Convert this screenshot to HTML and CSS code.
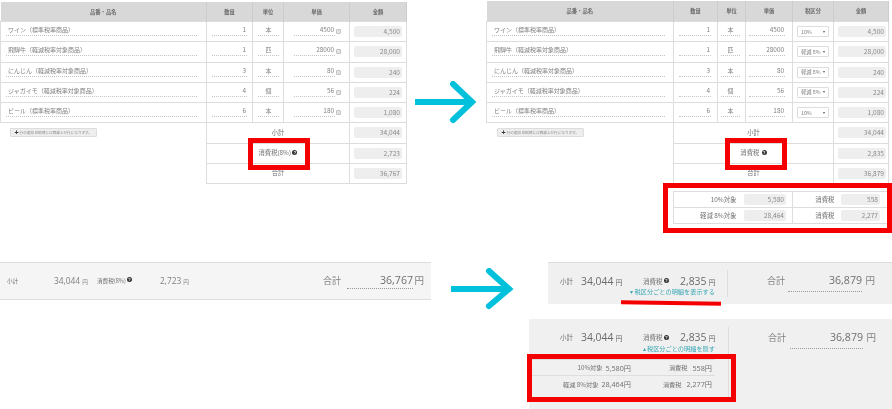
FILE: index.html
```html
<!DOCTYPE html>
<html lang="ja">
<head>
<meta charset="utf-8">
<title>消費税</title>
<link rel="stylesheet" href="styles.css">
</head>
<body>
<div class="canvas">

<section class="shot shot-a">
<table class="sheet">
<colgroup><col class="a1"><col class="a2"><col class="a3"><col class="a4"><col class="a5"></colgroup>
<thead><tr><th>品番・品名</th><th>数量</th><th>単位</th><th>単価</th><th>金額</th></tr></thead>
<tbody>
<tr><td class="name"><div class="f">ワイン（標準税率商品）</div></td><td><div class="f r">1</div></td><td><div class="f c">本</div></td><td><div class="pr"><div class="f r">4500</div><i class="cal"></i></div></td><td><div class="amt">4,500</div></td></tr>
<tr><td class="name"><div class="f">飛騨牛（軽減税率対象商品）</div></td><td><div class="f r">1</div></td><td><div class="f c">匹</div></td><td><div class="pr"><div class="f r">28000</div><i class="cal"></i></div></td><td><div class="amt">28,000</div></td></tr>
<tr><td class="name"><div class="f">にんじん（軽減税率対象商品）</div></td><td><div class="f r">3</div></td><td><div class="f c">本</div></td><td><div class="pr"><div class="f r">80</div><i class="cal"></i></div></td><td><div class="amt">240</div></td></tr>
<tr><td class="name"><div class="f">ジャガイモ（軽減税率対象商品）</div></td><td><div class="f r">4</div></td><td><div class="f c">個</div></td><td><div class="pr"><div class="f r">56</div><i class="cal"></i></div></td><td><div class="amt">224</div></td></tr>
<tr><td class="name"><div class="f">ビール（標準税率商品）</div></td><td><div class="f r">6</div></td><td><div class="f c">本</div></td><td><div class="pr"><div class="f r">180</div><i class="cal"></i></div></td><td><div class="amt">1,080</div></td></tr>
<tr class="sum"><td class="blank" rowspan="3"><span class="addbtn"><b>+</b>行の追加 印刷時には罫線上が行になります。</span></td><td colspan="3">小計</td><td><div class="amt">34,044</div></td></tr>
<tr class="sum"><td colspan="3">消費税(8%) <i class="q">?</i></td><td><div class="amt">2,723</div></td></tr>
<tr class="sum"><td colspan="3">合計</td><td><div class="amt">36,767</div></td></tr>
</tbody>
</table>
</section>

<section class="shot shot-b">
<table class="sheet">
<colgroup><col class="b1"><col class="b2"><col class="b3"><col class="b4"><col class="b5"><col class="b6"></colgroup>
<thead><tr><th>品番・品名</th><th>数量</th><th>単位</th><th>単価</th><th>税区分</th><th>金額</th></tr></thead>
<tbody>
<tr><td class="name"><div class="f">ワイン（標準税率商品）</div></td><td><div class="f r">1</div></td><td><div class="f c">本</div></td><td><div class="f r">4500</div></td><td><div class="sel">10%<i></i></div></td><td><div class="amt">4,500</div></td></tr>
<tr><td class="name"><div class="f">飛騨牛（軽減税率対象商品）</div></td><td><div class="f r">1</div></td><td><div class="f c">匹</div></td><td><div class="f r">28000</div></td><td><div class="sel">軽減 8%<i></i></div></td><td><div class="amt">28,000</div></td></tr>
<tr><td class="name"><div class="f">にんじん（軽減税率対象商品）</div></td><td><div class="f r">3</div></td><td><div class="f c">本</div></td><td><div class="f r">80</div></td><td><div class="sel">軽減 8%<i></i></div></td><td><div class="amt">240</div></td></tr>
<tr><td class="name"><div class="f">ジャガイモ（軽減税率対象商品）</div></td><td><div class="f r">4</div></td><td><div class="f c">個</div></td><td><div class="f r">56</div></td><td><div class="sel">軽減 8%<i></i></div></td><td><div class="amt">224</div></td></tr>
<tr><td class="name"><div class="f">ビール（標準税率商品）</div></td><td><div class="f r">6</div></td><td><div class="f c">本</div></td><td><div class="f r">180</div></td><td><div class="sel">10%<i></i></div></td><td><div class="amt">1,080</div></td></tr>
<tr class="sum"><td class="blank" rowspan="3"><span class="addbtn"><b>+</b>行の追加 印刷時には罫線上が行になります。</span></td><td colspan="4">小計</td><td><div class="amt">34,044</div></td></tr>
<tr class="sum"><td colspan="4">消費税 <i class="q q-gap">?</i></td><td><div class="amt">2,835</div></td></tr>
<tr class="sum"><td colspan="4">合計</td><td><div class="amt">36,879</div></td></tr>
</tbody>
</table>
<table class="taxes">
<tr><th>10%対象</th><td><div class="amt">5,580</div></td><th>消費税</th><td><div class="amt">558</div></td></tr>
<tr><th>軽減 8%対象</th><td><div class="amt">28,464</div></td><th>消費税</th><td><div class="amt">2,277</div></td></tr>
</table>
</section>

<section class="bar bar-a">
<div class="bar-main">
<span class="lbl w-a1">小計</span><span class="val w-a2">34,044<small>円</small></span>
<span class="lbl w-a3">消費税(8%) <i class="q">?</i></span><span class="val w-a4">2,723<small>円</small></span>
</div>
<div class="total total-a"><span class="tl">合計</span><span class="tv">36,767</span><span class="ty">円</span></div>
</section>

<section class="bar bar-b">
<div class="bar-left">
<div class="line"><span class="lbl">小計</span><span class="val big w-b1">34,044<small>円</small></span><span class="lbl w-b2">消費税 <i class="q">?</i></span><span class="val big w-b3">2,835<small>円</small></span></div>
<a class="toggle">▾ 税区分ごとの明細を表示する</a>
</div>
<div class="total total-b"><span class="tl">合計</span><span class="tv">36,879</span><span class="ty">円</span></div>
</section>

<section class="bar bar-c">
<div class="bar-left">
<div class="line"><span class="lbl">小計</span><span class="val big w-b1">34,044<small>円</small></span><span class="lbl w-b2">消費税 <i class="q">?</i></span><span class="val big w-b3">2,835<small>円</small></span></div>
<a class="toggle">▴ 税区分ごとの明細を隠す</a>
<div class="detail first"><div class="dc dc1"><span class="dk">10%対象</span><span class="dv">5,580円</span></div><div class="dc dc2"><span class="dk">消費税</span><span class="dv">558円</span></div></div>
<div class="detail"><div class="dc dc1"><span class="dk">軽減 8%対象</span><span class="dv">28,464円</span></div><div class="dc dc2"><span class="dk">消費税</span><span class="dv">2,277円</span></div></div>
</div>
<div class="total total-b"><span class="tl">合計</span><span class="tv">36,879</span><span class="ty">円</span></div>
</section>

<svg class="arrow arrow-a" width="64" height="48" viewBox="0 0 64 48"><path d="M0 21H57M38 3L57 21L38 39" fill="none" stroke="#00c1dc" stroke-width="6" stroke-linecap="round"/></svg>
<svg class="arrow arrow-b" width="64" height="48" viewBox="0 0 64 48"><path d="M0 21H58M38 3L58 21L38 38" fill="none" stroke="#00c1dc" stroke-width="6" stroke-linecap="round"/></svg>

<div class="mark m1"></div>
<div class="mark m2"></div>
<div class="mark m3"></div>
<div class="mark m4"></div>
<div class="underline"></div>
</div>
</body>
</html>
```
FILE: styles.css
```css
* { box-sizing: border-box; }
html, body { margin: 0; padding: 0; background: #fff; }
body { font-family: "Noto Sans CJK JP", "Open Sans", sans-serif; color: #808080; overflow: hidden; }
.canvas { position: relative; width: 892px; height: 409px; overflow: hidden; }

.shot { position: absolute; filter: blur(0.35px); }
.shot-a { left: 0; top: 2px; width: 406px; }
.shot-b { left: 486px; top: 1px; width: 402px; }

.sheet { border-collapse: collapse; table-layout: fixed; width: 100%; font-size: 6px; }
.a1 { width: 206px; } .a2 { width: 46px; } .a3 { width: 31px; } .a4 { width: 66px; } .a5 { width: 57px; }
.b1 { width: 187px; } .b2 { width: 44px; } .b3 { width: 28px; } .b4 { width: 47px; } .b5 { width: 41px; } .b6 { width: 55px; }

.sheet th { background: #d8d8d8; height: 20.5px; font-size: 5.3px; font-weight: 700; color: #6a6a6a; border-right: 1px solid #ccc; padding: 0; text-align: center; }
.shot-a .sheet th { height: 19.5px; }
.sheet td { height: 20.25px; padding: 0 4px; border: 1px solid #ddd; overflow: hidden; line-height: 10px; }
.sheet td.name { padding: 0 9px 0 5px; }
.shot-b .sheet td.name { padding: 0 8px 0 5px; }
.shot-a tbody tr:not(.sum) td:nth-child(2) { padding: 0 5px; }
.shot-a tbody tr:not(.sum) td:nth-child(3) { padding: 0 4px 0 5px; }
.shot-a tbody tr:not(.sum) td:nth-child(4) { padding: 0 9px 0 10px; }
.shot-b tbody tr:not(.sum) td:nth-child(2) { padding: 0 6px 0 5px; }
.shot-b tbody tr:not(.sum) td:nth-child(3) { padding: 0 5px 0 3px; }
.shot-b tbody tr:not(.sum) td:nth-child(4) { padding: 0 7px 0 3px; }
.shot-b .sheet tbody td:last-child { padding: 0 2px 0 4px; }
.sheet tr.sum td { text-align: center; color: #707070; font-size: 6.3px; }
.sheet td.blank { border: 0; border-right: 1px solid #ddd; vertical-align: top; text-align: left !important; padding: 5px 0 0 9px; }
.shot-b .sheet td.blank { padding-left: 10px; }

.f { flex: 1; border-bottom: 1px dotted #c4c4c4; height: 11px; line-height: 10px; margin-bottom: 2px; padding: 0 2px; white-space: nowrap; font-size: 6px; }
.f.r { text-align: right; padding: 0 1px; font-size: 6.4px; }
.f.c { text-align: center; }
.pr { display: flex; align-items: center; }
.amt { background: #eee; border-radius: 2px; height: 11px; line-height: 11px; text-align: right; padding: 0 2px; font-size: 6.6px; color: #8a8a8a; }
.cal { flex: none; width: 5px; height: 5px; margin: 0 -1px 0 1px; background: #e4e4e4; border: 1px solid #c4c4c4; border-radius: 1px; }

.sel { display: flex; justify-content: space-between; align-items: center; height: 11px; border: 1px solid #ddd; padding: 0 3px 0 3px; font-size: 5.3px; background: #fff; border-radius: 1px; }
.sel i { border: 1.5px solid transparent; border-top: 2px solid #555; border-bottom: 0; }

.addbtn { display: inline-flex; align-items: center; height: 9px; width: 87px; padding: 0 2px 0 4px; background: #eee; border: 1px solid #ddd; font-size: 3.6px; line-height: 1; color: #888; border-radius: 1px; white-space: nowrap; overflow: hidden; }
.addbtn b { font: 700 7px/7px "Liberation Sans", sans-serif; color: #333; margin-right: 1px; }

.q { display: inline-block; width: 5px; height: 5px; border-radius: 50%; background: #333; color: #fff; font: 700 4px/5px "Liberation Sans", sans-serif; text-align: center; vertical-align: 1.5px; }
.q-gap { margin-left: 1px; }

.taxes { position: absolute; left: 187px; top: 190px; width: 215px; border-collapse: collapse; table-layout: fixed; font-size: 6.4px; }
.taxes th { font-weight: 400; text-align: right; padding: 0 2px 0 0; height: 16px; border-top: 1px solid #ddd; border-bottom: 1px solid #ddd; color: #707070; }
.taxes td { padding: 0; border-top: 1px solid #ddd; border-bottom: 1px solid #ddd; }
.taxes th:first-child { border-left: 1px solid #ddd; width: 65px; }
.taxes td:nth-child(2) { width: 54px; border-right: 1px solid #ddd; padding-right: 5px; }
.taxes th:nth-child(3) { width: 45px; padding-right: 3px; }
.taxes td:last-child { border-right: 1px solid #ddd; padding-right: 2px; }

.bar { position: absolute; display: flex; filter: blur(0.3px); }
.bar-a { left: 0; top: 262px; width: 431px; height: 38px; background: #f5f5f5; border-top: 1px solid #ddd; border-bottom: 1px solid #ddd; padding-left: 7px; }
.bar-b { left: 548px; top: 262px; width: 344px; height: 42px; background: #f0f0f0; border-top: 1px solid #ddd; padding-left: 12px; }
.bar-c { left: 529px; top: 319px; width: 363px; height: 90px; background: #f0f0f0; padding-left: 3px; }

.bar-main { display: flex; align-items: center; width: 316px; padding-bottom: 1px; }
.lbl { font-size: 6.5px; color: #707070; white-space: nowrap; }
.val { font-family: "Open Sans", sans-serif; font-size: 8.4px; color: #808080; white-space: nowrap; }
.val small { font-family: "Noto Sans CJK JP", sans-serif; font-size: 5.6px; margin-left: 2px; }
.val.big { font-size: 10.4px; color: #6a6a6a; }
.val.big small { font-size: 7px; margin-left: 2px; }
.bar-a .lbl { font-size: 5.6px; }
.w-a1 { width: 47px; } .w-a2 { width: 43px; } .w-a3 { width: 63px; } .w-a4 { width: 40px; }

.bar-left { width: 168px; border-right: 1px solid #ddd; margin-top: 7px; height: 27px; padding: 3px 12px 0 0; display: flex; flex-direction: column; align-items: flex-end; }
.bar-c .bar-left { width: 197px; height: 70px; margin-top: 8px; padding: 2px 13px 0 0; }
.line { display: flex; align-items: center; height: 16px; width: 155px; }
.line .lbl:first-child { width: 21px; }
.w-b1 { width: 62px; }
.w-b2 { width: 37px; }
.w-b3 { width: 35px; }
.toggle { font-size: 6.2px; line-height: 10px; margin-top: -1px; color: #3aa7b5; white-space: nowrap; }
.detail { display: flex; align-items: center; height: 16px; width: 183px; color: #707070; flex: none; }
.detail.first { height: 17px; margin-top: 5px; border-top: 1px solid #ddd; border-bottom: 1px solid #ddd; }
.dc { display: flex; justify-content: flex-end; align-items: center; gap: 3px; white-space: nowrap; flex: none; }
.dc1 { width: 99px; }
.dc2 { width: 81px; gap: 5px; }
.dk { font-size: 6.2px; }
.dv { font-family: "Open Sans", "Noto Sans CJK JP", sans-serif; font-size: 7.2px; }

.total { display: grid; grid-template-columns: 24px 66px 11px; align-items: end; color: #808080; }
.total-a { height: 26px; padding-top: 8px; }
.total-b { margin-left: 39px; height: 29px; padding-top: 5px; grid-template-columns: 21px 74px 13px; }
.bar-c .total-b { height: 30px; padding-top: 6px; grid-template-columns: 22px 73px 13px; }
.tl { font-size: 9px; align-self: center; white-space: nowrap; }
.tv { font-family: "Open Sans", sans-serif; font-size: 10.6px; text-align: right; border-bottom: 1px dotted #999; line-height: 15px; color: #6f6f6f; }
.total-b .tv { padding-bottom: 3px; }
.ty { font-size: 9.5px; text-align: right; align-self: center; }

.arrow { position: absolute; }
.arrow-a { left: 415px; top: 81px; }
.arrow-b { left: 451px; top: 268px; }

.mark { position: absolute; border: 5px solid #f40000; }
.m1 { left: 248px; top: 138px; width: 62px; height: 32px; }
.m2 { left: 725px; top: 138px; width: 62px; height: 32px; }
.m3 { left: 663px; top: 183px; width: 229px; height: 50px; }
.m4 { left: 527px; top: 354px; width: 209px; height: 48px; }
.underline { position: absolute; left: 621px; top: 301px; width: 100px; height: 4px; background: #f40000; transform: rotate(1deg); }
```
